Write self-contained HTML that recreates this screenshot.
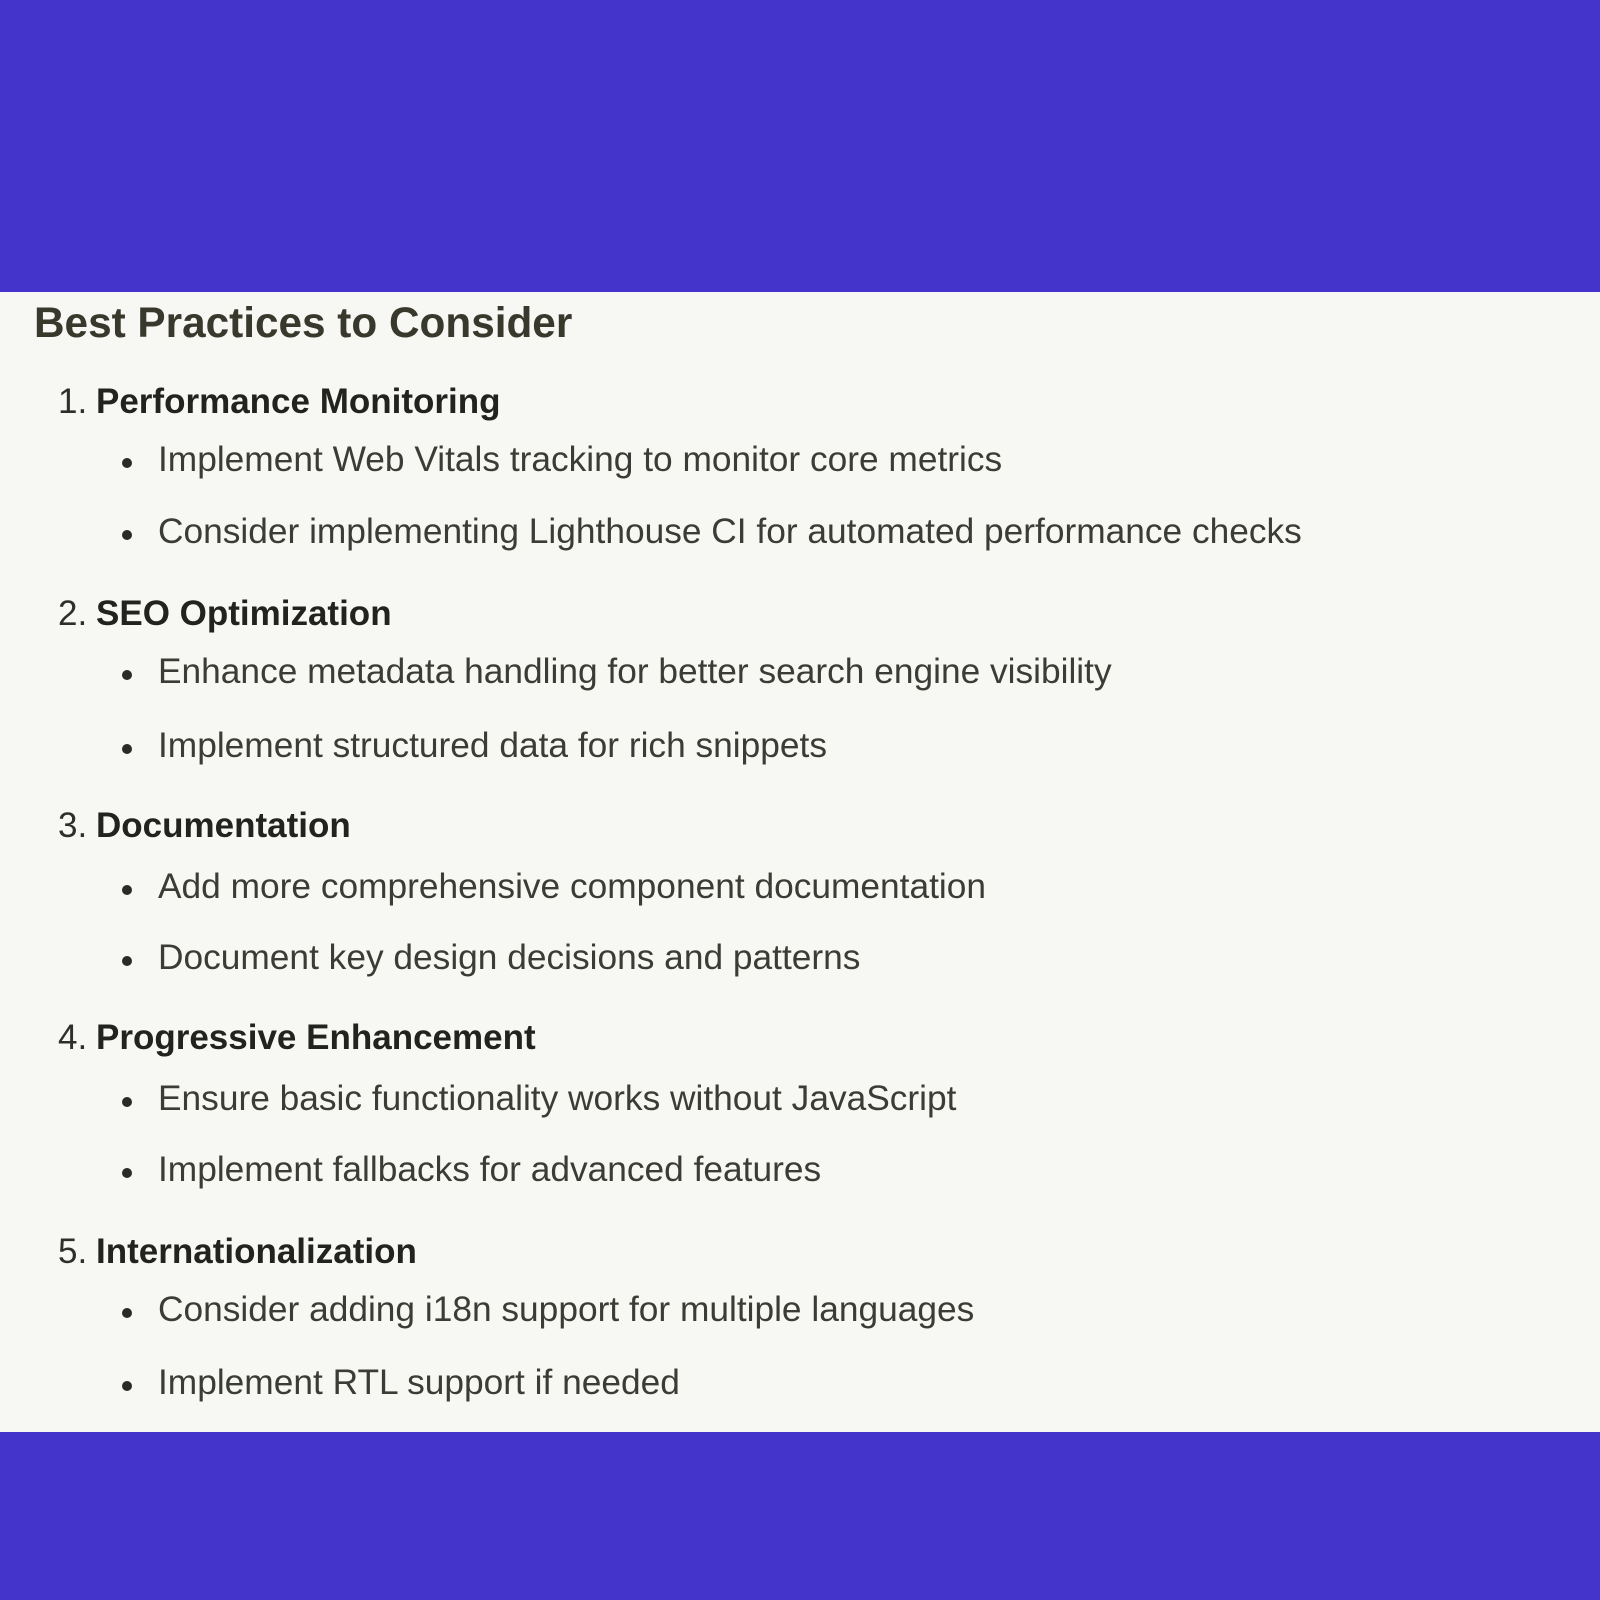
<!DOCTYPE html>
<html><head><meta charset="utf-8"><style>
html,body{margin:0;padding:0;}
body{width:1600px;height:1600px;position:relative;background:#4434cc;font-family:"Liberation Sans",sans-serif;overflow:hidden;}
.panel{position:absolute;left:0;top:292px;width:1600px;height:1140px;background:#f7f7f3;}
.t{position:absolute;white-space:nowrap;line-height:40px;}
h1{position:absolute;margin:0;left:34px;top:299px;font-size:42.3px;line-height:48px;font-weight:bold;color:#38382c;white-space:nowrap;}
.n{font-size:35px;color:#2e2e2a;}
.n b{color:#22221e;}
.n .num{position:absolute;left:-38px;font-weight:normal;}
.b{font-size:35.3px;color:#3c3c36;left:158px;}
.b:before{content:"";position:absolute;left:-36px;top:18px;width:10px;height:10px;border-radius:50%;background:#2a2a26;}
</style></head><body>
<div class="panel"></div>
<h1>Best Practices to Consider</h1>

<div class="t n" style="left:96px;top:382px"><span class="num">1.</span><b>Performance Monitoring</b></div>
<div class="t b" style="top:440px">Implement Web Vitals tracking to monitor core metrics</div>
<div class="t b" style="top:512px">Consider implementing Lighthouse CI for automated performance checks</div>

<div class="t n" style="left:96px;top:594px"><span class="num">2.</span><b>SEO Optimization</b></div>
<div class="t b" style="top:652px">Enhance metadata handling for better search engine visibility</div>
<div class="t b" style="top:726px">Implement structured data for rich snippets</div>

<div class="t n" style="left:96px;top:806px"><span class="num">3.</span><b>Documentation</b></div>
<div class="t b" style="top:867px">Add more comprehensive component documentation</div>
<div class="t b" style="top:938px">Document key design decisions and patterns</div>

<div class="t n" style="left:96px;top:1018px"><span class="num">4.</span><b>Progressive Enhancement</b></div>
<div class="t b" style="top:1079px">Ensure basic functionality works without JavaScript</div>
<div class="t b" style="top:1150px">Implement fallbacks for advanced features</div>

<div class="t n" style="left:96px;top:1232px"><span class="num">5.</span><b>Internationalization</b></div>
<div class="t b" style="top:1290px">Consider adding i18n support for multiple languages</div>
<div class="t b" style="top:1363px">Implement RTL support if needed</div>
</body></html>
